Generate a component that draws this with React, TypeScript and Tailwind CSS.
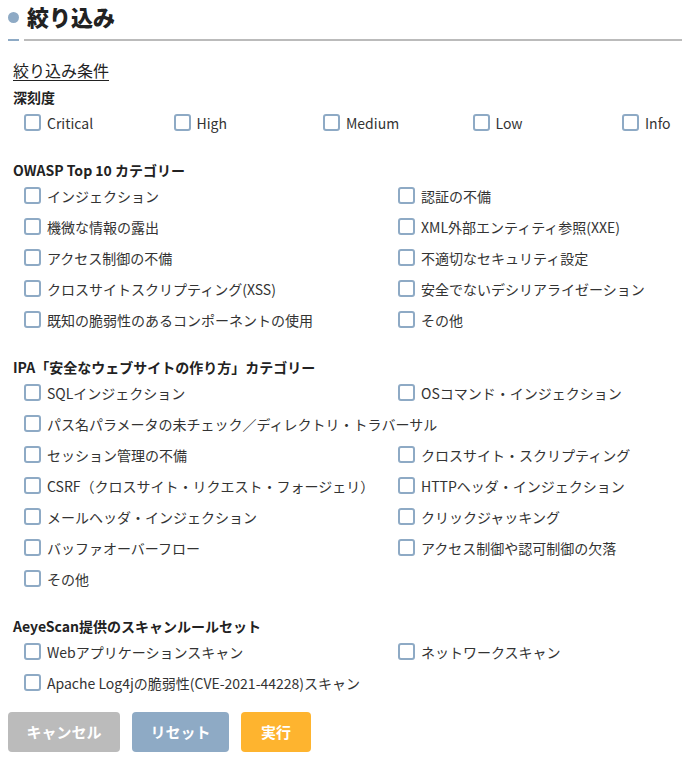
import React from 'react';

const font = { fontFamily: '"Noto Sans CJK JP", "Noto Sans", sans-serif' };

const severities = ['Critical', 'High', 'Medium', 'Low', 'Info'];

const owasp = [
  'インジェクション',
  '認証の不備',
  '機微な情報の露出',
  'XML外部エンティティ参照(XXE)',
  'アクセス制御の不備',
  '不適切なセキュリティ設定',
  'クロスサイトスクリプティング(XSS)',
  '安全でないデシリアライゼーション',
  '既知の脆弱性のあるコンポーネントの使用',
  'その他',
];

// one-item rows span the full width, null = empty right cell
const ipa: (string | null)[][] = [
  ['SQLインジェクション', 'OSコマンド・インジェクション'],
  ['パス名パラメータの未チェック／ディレクトリ・トラバーサル'],
  ['セッション管理の不備', 'クロスサイト・スクリプティング'],
  ['CSRF（クロスサイト・リクエスト・フォージェリ）', 'HTTPヘッダ・インジェクション'],
  ['メールヘッダ・インジェクション', 'クリックジャッキング'],
  ['バッファオーバーフロー', 'アクセス制御や認可制御の欠落'],
  ['その他', null],
];

const aeye = ['Webアプリケーションスキャン', 'ネットワークスキャン', 'Apache Log4jの脆弱性(CVE-2021-44228)スキャン'];

function Check({ label, className = '' }: { label: string; className?: string }) {
  return (
    <label className={`flex h-[31px] items-center whitespace-nowrap ${className}`}>
      <input type="checkbox" className="sr-only" />
      <span className="box-border h-[17px] w-[17px] shrink-0 rounded-[3px] border-2 border-[#8eaac5] bg-white" />
      <span className="ml-[6px] text-[14px] leading-none text-[#333]">{label}</span>
    </label>
  );
}

function SectionTitle({ children }: { children: React.ReactNode }) {
  return <div className="pl-[13px] text-[14px] font-bold leading-[20px] text-[#222]">{children}</div>;
}

export default function App() {
  return (
    <div className="min-h-screen overflow-hidden bg-white text-[#333]" style={font}>
      {/* Heading */}
      <div className="flex h-[32px] items-end">
        <span className="mb-[9px] ml-[8px] h-[11px] w-[11px] rounded-full bg-[#8eaac5]" />
        <h1 className="ml-[8px] text-[22px] font-black leading-[32px] text-[#222]">絞り込み</h1>
      </div>
      <div className="mt-[7px] flex h-[2px]">
        <div className="ml-[8px] w-[11px] bg-[#8eaac5]" />
        <div className="ml-[5px] flex-1 bg-[#bbbbbb]" />
      </div>

      <div className="pl-[13px] pt-[17px]">
        <span className="text-[16px] leading-[22px] text-[#222] underline underline-offset-[3px]">絞り込み条件</span>
      </div>

      <div className="mt-[5px]">
        <SectionTitle>深刻度</SectionTitle>
        <div className="flex pl-[24px]">
          {severities.map((s, i) => (
            <Check key={s} label={s} className={i < 4 ? 'w-[149.5px] shrink-0' : ''} />
          ))}
        </div>
      </div>

      <div className="mt-[22px]">
        <SectionTitle>OWASP Top 10 カテゴリー</SectionTitle>
        <div className="grid grid-cols-[374px_1fr] pl-[24px]">
          {owasp.map((s) => (
            <Check key={s} label={s} />
          ))}
        </div>
      </div>

      <div className="mt-[22px]">
        <SectionTitle>IPA「安全なウェブサイトの作り方」カテゴリー</SectionTitle>
        <div className="pl-[24px]">
          {ipa.map((row, i) =>
            row.length === 1 ? (
              <Check key={i} label={row[0] as string} />
            ) : (
              <div key={i} className="grid grid-cols-[374px_1fr]">
                <Check label={row[0] as string} />
                {row[1] ? <Check label={row[1]} /> : <div />}
              </div>
            )
          )}
        </div>
      </div>

      <div className="mt-[22px]">
        <SectionTitle>AeyeScan提供のスキャンルールセット</SectionTitle>
        <div className="pl-[24px]">
          <div className="grid grid-cols-[374px_1fr]">
            <Check label={aeye[0]} />
            <Check label={aeye[1]} />
          </div>
          <Check label={aeye[2]} />
        </div>
      </div>

      <div className="mt-[14px] flex gap-[12px] pl-[8px]">
        <button className="h-[40px] w-[112px] rounded-[4px] bg-[#bbbbbb] text-[15px] font-bold text-white">キャンセル</button>
        <button className="h-[40px] w-[97px] rounded-[4px] bg-[#8eaac5] text-[15px] font-bold text-white">リセット</button>
        <button className="h-[40px] w-[70px] rounded-[4px] bg-[#feb42f] text-[15px] font-bold text-white">実行</button>
      </div>
    </div>
  );
}
